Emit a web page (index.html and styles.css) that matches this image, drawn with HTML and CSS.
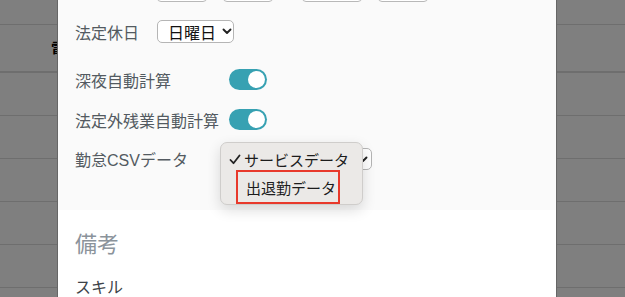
FILE: index.html
```html
<!DOCTYPE html>
<html lang="ja">
<head>
<meta charset="utf-8">
<link rel="stylesheet" href="styles.css">
</head>
<body>
<div class="backdrop">
  <div class="brow r1"></div>
  <div class="brow r2"><span class="bhead">電話</span></div>
  <div class="brow r3"></div>
  <div class="brow r3"></div>
  <div class="brow r3"></div>
  <div class="brow r3"></div>
  <div class="brow r3"></div>
  <div class="brow r3"></div>
</div>
<div class="modal">
  <div class="settings">
    <div class="inputs">
      <span class="inp w50"></span>
      <span class="inp w50 ml16"></span>
      <span class="inp w60 ml29"></span>
      <span class="inp w50 ml16"></span>
    </div>
    <div class="row row-holiday">
      <span class="label">法定休日</span>
      <span class="select sel-day">日曜日<svg class="chev" width="10" height="7" viewBox="0 0 10 7"><path d="M1.5 1.5 L5 5 L8.5 1.5" fill="none" stroke="#222" stroke-width="1.9" stroke-linecap="round" stroke-linejoin="round"/></svg></span>
    </div>
    <div class="row row-t1">
      <span class="label lw-a">深夜自動計算</span>
      <span class="toggle"><span class="knob"></span></span>
    </div>
    <div class="row row-t2">
      <span class="label lw-a">法定外残業自動計算</span>
      <span class="toggle"><span class="knob"></span></span>
    </div>
    <div class="row row-csv">
      <span class="label lw-a">勤怠CSVデータ</span>
      <span class="select sel-csv"><svg class="chev" width="10" height="7" viewBox="0 0 10 7"><path d="M1.5 1.5 L5 5 L8.5 1.5" fill="none" stroke="#222" stroke-width="1.9" stroke-linecap="round" stroke-linejoin="round"/></svg></span>
      <div class="menu">
        <div class="opt"><svg class="check" width="12" height="11" viewBox="0 0 12 11"><path d="M1.5 6 L4.5 9.2 L10.5 1.5" fill="none" stroke="#222" stroke-width="1.8" stroke-linecap="round" stroke-linejoin="round"/></svg>サービスデータ</div>
        <div class="opt opt2"><span class="hl">出退勤データ</span></div>
      </div>
    </div>
  </div>
  <div class="notes">
    <div class="heading">備考</div>
    <div class="skill">スキル</div>
  </div>
</div>
</body>
</html>
```
FILE: styles.css
```css
html, body {
  margin: 0;
  padding: 0;
}
body {
  width: 625px;
  height: 297px;
  overflow: hidden;
  background: #7f7f7f;
  font-family: "Liberation Sans", "Noto Sans CJK JP", sans-serif;
  position: relative;
}
.backdrop {
  display: flex;
  flex-direction: column;
}
.brow {
  box-sizing: border-box;
  border-bottom: 1px solid #6e6e6e;
  position: relative;
}
.r1 { height: 25px; }
.r2 { height: 48px; border-bottom: 2px solid #6e6e6e; }
.r3 { height: 43px; }
.bhead {
  position: absolute;
  left: 51px;
  top: 12px;
  font-weight: bold;
  font-size: 15px;
  color: #000;
  font-family: "Noto Sans CJK JP", sans-serif;
}
.modal {
  position: absolute;
  left: 58px;
  top: 0;
  width: 498px;
  height: 297px;
  overflow: hidden;
  background: #fff;
  box-shadow: -1px 0 0 #666, 1px 0 0 #666;
  display: flex;
  flex-direction: column;
}
.settings {
  background: #fafafa;
  height: 210px;
  flex: none;
  padding-left: 17px;
  box-sizing: border-box;
  position: relative;
  z-index: 1;
}
.inputs {
  height: 2px;
  overflow: hidden;
  display: flex;
  align-items: flex-end;
  padding-left: 82px;
}
.inp {
  display: block;
  height: 20px;
  box-sizing: border-box;
  border: 1px solid #b8b8b8;
  border-radius: 4px;
  background: #fff;
}
.w50 { width: 50px; }
.w60 { width: 60px; }
.ml16 { margin-left: 16px; }
.ml29 { margin-left: 29px; }
.row {
  display: flex;
  align-items: center;
  position: relative;
}
.label {
  font-size: 16px;
  color: #535a61;
  font-family: "Liberation Sans", "Noto Sans CJK JP", sans-serif;
  white-space: nowrap;
}
.row-holiday {
  margin-top: 18px;
  height: 23px;
}
.row-holiday .label { width: 82px; }
.select {
  display: flex;
  align-items: center;
  box-sizing: border-box;
  height: 23px;
  background: #fff;
  border: 1px solid #b5b5b5;
  border-radius: 5px;
  font-size: 16px;
  color: #111;
  font-family: "Noto Sans CJK JP", sans-serif;
}
.sel-day {
  width: 77px;
  padding-left: 10px;
}
.sel-day .chev { margin-left: 6px; }
.row-t1 {
  margin-top: 26px;
  height: 21px;
}
.row-t2 {
  margin-top: 19px;
  height: 21px;
}
.lw-a { width: 154px; }
.toggle {
  display: flex;
  justify-content: flex-end;
  align-items: center;
  width: 38px;
  height: 21px;
  box-sizing: border-box;
  padding-right: 2px;
  border-radius: 11px;
  background: #37a1b2;
}
.knob {
  width: 17px;
  height: 17px;
  border-radius: 50%;
  background: #fff;
}
.row-csv {
  margin-top: 18px;
  height: 22px;
}
.sel-csv {
  width: 143px;
  height: 22px;
  justify-content: flex-end;
  padding-right: 3px;
}
.menu {
  position: absolute;
  left: 145px;
  top: -6px;
  width: 143px;
  height: 63px;
  box-sizing: border-box;
  background: #ebe9e7;
  border: 1px solid #cfcdcb;
  border-radius: 7px;
  box-shadow: 0 5px 14px rgba(0, 0, 0, 0.14);
  font-family: "Noto Sans CJK JP", sans-serif;
  font-size: 15px;
  color: #1c1c1c;
  padding-top: 5px;
}
.opt {
  display: flex;
  align-items: center;
  height: 22px;
  padding-left: 8px;
  white-space: nowrap;
}
.check {
  margin-right: 3px;
  flex: none;
}
.opt2 {
  padding-left: 16px;
  height: 34px;
}
.hl {
  display: flex;
  align-items: center;
  box-sizing: border-box;
  height: 34px;
  width: 104px;
  border: 2px solid #e8392b;
  padding-left: 8px;
  margin-left: -1px;
}
.notes {
  padding-left: 17px;
  display: flex;
  flex-direction: column;
}
.heading {
  margin-top: 17px;
  font-size: 22px;
  color: #8b939b;
  font-family: "Noto Sans CJK JP", sans-serif;
  line-height: 30px;
}
.skill {
  margin-top: 18px;
  font-size: 16px;
  color: #3d4349;
  font-family: "Noto Sans CJK JP", sans-serif;
  line-height: 22px;
}
```
